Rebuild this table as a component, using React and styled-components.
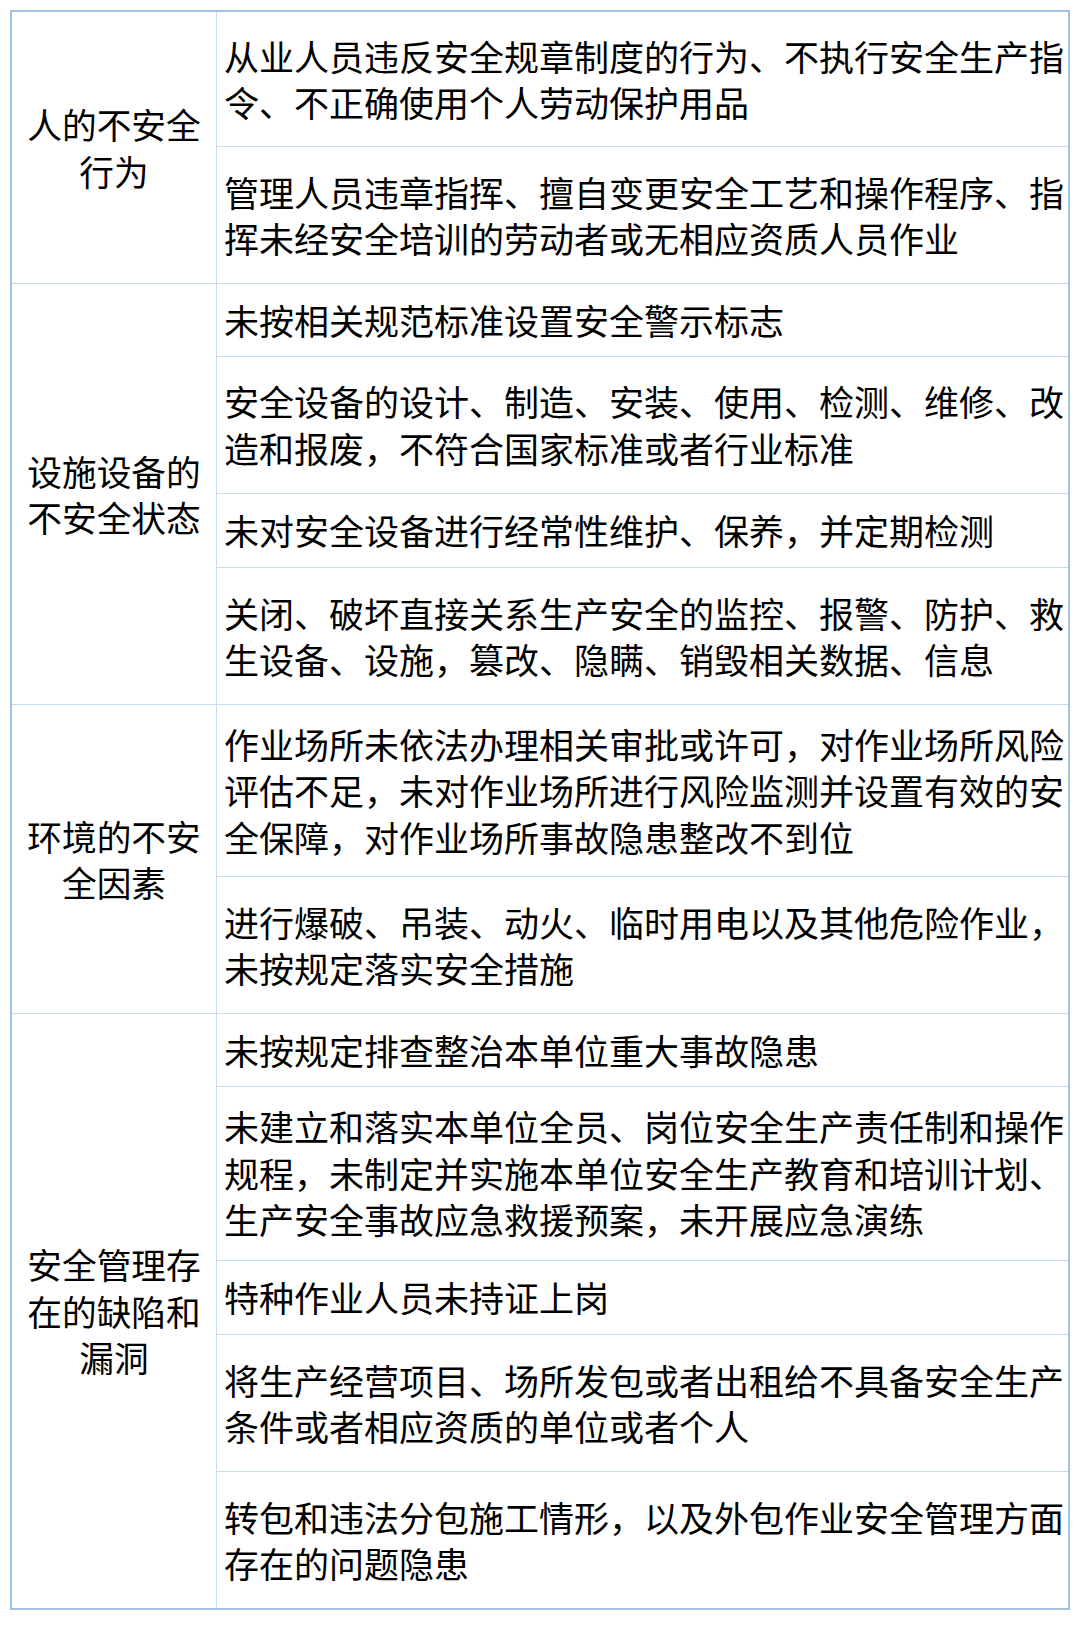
import React from "react";
import styled, { createGlobalStyle } from "styled-components";

const Global = createGlobalStyle`
  html, body { margin: 0; padding: 0; background: #ffffff; }
  body {
    font-family: "Noto Sans CJK SC", "Noto Sans", sans-serif;
    color: #000;
  }
`;

const Page = styled.div`
  padding: 10px;
  width: 1060px;
`;

const Table = styled.div`
  border: 2px solid #9fc2e5;
  display: flex;
  flex-direction: column;
  background: #fff;
`;

const Group = styled.div`
  display: flex;
  border-top: ${(p) => (p.$first ? "none" : "1px solid #c8dcf1")};
`;

const Category = styled.div`
  width: 205px;
  flex: none;
  border-right: 1px solid #c8dcf1;
  display: flex;
  align-items: center;
  justify-content: center;
  text-align: center;
  padding: 0 7px;
  box-sizing: border-box;
  font-size: 34.7px;
  line-height: 46.5px;
`;

const Items = styled.div`
  flex: 1;
  display: flex;
  flex-direction: column;
`;

const heights = { 1: 74.5, 2: 137, 3: 174 };

const Item = styled.div`
  box-sizing: border-box;
  height: ${(p) => heights[p.$lines] - (p.$first ? 3 : 0)}px;
  border-top: ${(p) => (p.$first ? "none" : "1px solid #c8dcf1")};
  display: flex;
  align-items: center;
  padding: 0 2px 0 7px;
  font-size: 35px;
  line-height: 46.5px;
`;

const ItemText = styled.div`
  width: 100%;
`;

const data = [
  {
    cat: "人的不安全行为",
    items: [
      ["从业人员违反安全规章制度的行为、不执行安全生产指令、不正确使用个人劳动保护用品", 2],
      ["管理人员违章指挥、擅自变更安全工艺和操作程序、指挥未经安全培训的劳动者或无相应资质人员作业", 2],
    ],
  },
  {
    cat: "设施设备的不安全状态",
    items: [
      ["未按相关规范标准设置安全警示标志", 1],
      ["安全设备的设计、制造、安装、使用、检测、维修、改造和报废，不符合国家标准或者行业标准", 2],
      ["未对安全设备进行经常性维护、保养，并定期检测", 1],
      ["关闭、破坏直接关系生产安全的监控、报警、防护、救生设备、设施，篡改、隐瞒、销毁相关数据、信息", 2],
    ],
  },
  {
    cat: "环境的不安全因素",
    items: [
      ["作业场所未依法办理相关审批或许可，对作业场所风险评估不足，未对作业场所进行风险监测并设置有效的安全保障，对作业场所事故隐患整改不到位", 3],
      ["进行爆破、吊装、动火、临时用电以及其他危险作业，未按规定落实安全措施", 2],
    ],
  },
  {
    cat: "安全管理存在的缺陷和漏洞",
    items: [
      ["未按规定排查整治本单位重大事故隐患", 1],
      ["未建立和落实本单位全员、岗位安全生产责任制和操作规程，未制定并实施本单位安全生产教育和培训计划、生产安全事故应急救援预案，未开展应急演练", 3],
      ["特种作业人员未持证上岗", 1],
      ["将生产经营项目、场所发包或者出租给不具备安全生产条件或者相应资质的单位或者个人", 2],
      ["转包和违法分包施工情形，以及外包作业安全管理方面存在的问题隐患", 2],
    ],
  },
];

export default function App() {
  return (
    <Page>
      <Global />
      <Table>
        {data.map((g, gi) => (
          <Group key={gi} $first={gi === 0}>
            <Category>{g.cat}</Category>
            <Items>
              {g.items.map(([t, l], ii) => (
                <Item key={ii} $lines={l} $first={ii === 0}>
                  <ItemText>{t}</ItemText>
                </Item>
              ))}
            </Items>
          </Group>
        ))}
      </Table>
    </Page>
  );
}
